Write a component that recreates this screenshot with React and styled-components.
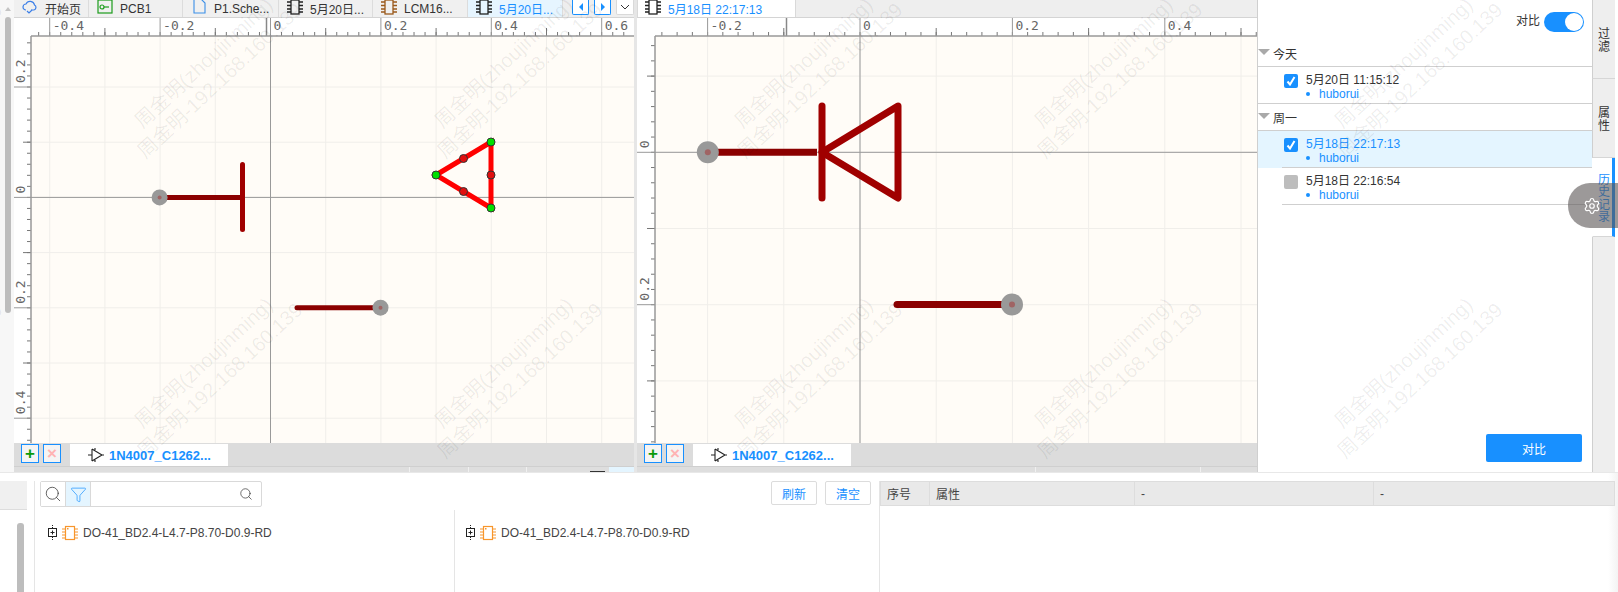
import styled, { createGlobalStyle } from "styled-components";
import { Search, Filter, Settings } from "lucide-react";

const GlobalStyle = createGlobalStyle`
  html, body { margin: 0; padding: 0; background: #fff; }
  body { font-family: "Liberation Sans", "Noto Sans CJK SC", sans-serif; font-size: 12px; color: #333; }
  * { box-sizing: border-box; }
`;

const Page = styled.div`
  position: relative;
  width: 1618px;
  height: 592px;
  overflow: hidden;
  display: flex;
  flex-direction: column;
`;

const Top = styled.div`
  height: 473px;
  flex: none;
  display: flex;
  border-bottom: 1px solid #e8e8e8;
`;

const Gutter = styled.div`
  width: 14px;
  flex: none;
  background: #f7f7f7;
  padding: 7px 3px 0 5px;
  &::before {
    content: "";
    display: block;
    width: 0;
    height: 0;
    margin: 0 0 6px 0;
    border-left: 3px solid transparent;
    border-right: 3px solid transparent;
    border-bottom: 4px solid #c4c4c4;
  }
`;

const ScrollThumb = styled.div`
  width: 6px;
  height: ${(p) => p.$h}px;
  background: #bdbdbd;
  border-radius: 3px;
`;

const Pane = styled.div`
  width: 620px;
  display: flex;
  flex-direction: column;
  flex: none;
`;

const PaneGap = styled.div`
  width: 3px;
  flex: none;
  background: #e6e6e6;
`;

const TabBar = styled.div`
  height: 18px;
  flex: none;
  display: flex;
  background: #eeeeee;
  border-bottom: 1px solid #d4d4d4;
  overflow: hidden;
`;

const DocTab = styled.div`
  width: ${(p) => p.$w}px;
  display: flex;
  align-items: center;
  gap: 7px;
  padding-left: 8px;
  flex: none;
  white-space: nowrap;
  background: ${(p) => (p.$active ? "#e6f5ff" : "#f0f0f0")};
  color: ${(p) => (p.$active ? "#1890ff" : "#333")};
  border-right: 1px solid #dcdcdc;
  svg { flex: none; margin-top: -4px; }
`;

const CompareTab = styled(DocTab)`
  background: #fff;
  color: #1890ff;
  border: 1px solid #d9d9d9;
  border-top: 0;
  height: 18px;
  padding-left: 7px;
`;

const NavGroup = styled.div`
  display: flex;
  margin-left: 9px;
  gap: 5px;
`;

const NavButton = styled.div`
  width: ${(p) => (p.$plain ? 18 : 17)}px;
  height: 15px;
  background: #fff;
  border: 1px solid ${(p) => (p.$plain ? "#d9d9d9" : "#1890ff")};
  border-top: 0;
  border-radius: 0 0 2px 2px;
  display: flex;
  align-items: center;
  justify-content: center;
`;

const Canvas = styled.svg`
  display: block;
  width: 620px;
  height: 425px;
  flex: none;
  background: #fff;
`;

const BottomTabs = styled.div`
  height: 23px;
  flex: none;
  background: #dcdcdc;
  display: flex;
  align-items: flex-end;
  padding-left: 7px;
`;

const SquareBtn = styled.div`
  width: 18px;
  height: 19px;
  margin: 0 4px 3px 0;
  background: #f4f4f4;
  border: 1px solid #1890ff;
  display: flex;
  align-items: center;
  justify-content: center;
  font-size: 17px;
  font-weight: 700;
  line-height: 1;
  color: ${(p) => p.$color};
`;

const SheetTab = styled.div`
  width: 158px;
  height: 22px;
  margin-left: 5px;
  background: #fff;
  display: flex;
  align-items: center;
  gap: 5px;
  padding-left: 18px;
  color: #1890ff;
  font-weight: 700;
  font-size: 13px;
  white-space: nowrap;
`;

const Strip = styled.div`
  height: 6px;
  flex: none;
  background: #dedede;
  border-top: 1px solid #cfcfcf;
  display: flex;
  justify-content: flex-end;
`;

const StripCell = styled.div`
  flex: none;
  width: ${(p) => p.$w}px;
  background: ${(p) => p.$bg || "transparent"};
  border-left: ${(p) => (p.$line ? "1px solid #f0f0f0" : "0")};
  border-bottom: ${(p) => (p.$mark ? "1px solid #333" : "0")};
`;

const SidePanel = styled.div`
  width: 335px;
  flex: none;
  position: relative;
  display: flex;
  flex-direction: column;
  background: #fff;
  border-left: 1px solid #cfcfcf;
`;

const CompareSwitch = styled.div`
  height: 40px;
  flex: none;
  display: flex;
  justify-content: flex-end;
  align-items: flex-start;
  gap: 4px;
  padding: 12px 8px 0 0;
  line-height: 19px;
`;

const Toggle = styled.div`
  width: 40px;
  height: 20px;
  border-radius: 10px;
  background: #1890ff;
  padding: 1px;
  display: flex;
  justify-content: flex-end;
  &::after {
    content: "";
    width: 18px;
    height: 18px;
    border-radius: 50%;
    background: #fff;
  }
`;

const GroupHead = styled.div`
  height: 27px;
  display: flex;
  align-items: center;
  gap: 3px;
  padding-top: 1px;
  border-bottom: 1px solid #cfcfcf;
  font-size: 12px;
  &::before {
    content: "";
    width: 0;
    height: 0;
    margin-top: -3px;
    border-left: 6px solid transparent;
    border-right: 6px solid transparent;
    border-top: 6px solid #a9a9a9;
  }
`;

const HistoryRow = styled.div`
  height: 37px;
  display: flex;
  padding: 7px 0 0 26px;
  gap: 8px;
  background: ${(p) => (p.$selected ? "#e4f5ff" : "transparent")};
  color: ${(p) => (p.$selected ? "#1890ff" : "#333")};
  position: relative;
  &::after {
    content: "";
    position: absolute;
    left: ${(p) => (p.$inset ? 24 : 0)}px;
    right: 0;
    bottom: 0;
    border-bottom: 1px solid #cfcfcf;
  }
`;

const Check = styled.div`
  width: 14px;
  height: 14px;
  flex: none;
  border-radius: 2px;
  background: ${(p) => (p.$on ? "#1890ff" : "#bdbdbd")};
  display: flex;
  align-items: center;
  justify-content: center;
`;

const HistoryText = styled.div`
  line-height: 14px;
  margin-top: -1px;
`;

const Author = styled.div`
  display: flex;
  align-items: center;
  color: #1890ff;
  &::before {
    content: "";
    width: 4px;
    height: 4px;
    border-radius: 50%;
    background: #1890ff;
    margin: 0 9px 0 0;
  }
`;

const CompareButton = styled.div`
  position: absolute;
  right: 10px;
  top: 434px;
  width: 96px;
  height: 28px;
  border-radius: 2px;
  background: #1890ff;
  color: #fff;
  display: flex;
  align-items: center;
  justify-content: center;
`;

const SideTabs = styled.div`
  width: 23px;
  flex: none;
  display: flex;
  flex-direction: column;
  background: #eeeeee;
`;

const SideTab = styled.div`
  height: 79px;
  flex: none;
  display: flex;
  justify-content: center;
  align-items: center;
  border-bottom: 1px solid #d6d6d6;
  border-left: 1px solid ${(p) => (p.$active ? "#fff" : "#cfcfcf")};
  background: ${(p) => (p.$active ? "#fff" : "#eeeeee")};
  color: ${(p) => (p.$active ? "#1890ff" : "#333")};
  border-right: ${(p) => (p.$active ? "3px solid #1890ff" : "0")};
  padding-left: ${(p) => (p.$active ? 3 : 0)}px;
  span {
    width: 12px;
    line-height: 12.5px;
    word-break: break-all;
    text-align: center;
    margin-top: 3px;
  }
`;

const SideRest = styled.div`
  flex: 1;
  border-left: 1px solid #cfcfcf;
`;

const FloatGear = styled.div`
  position: absolute;
  right: 0;
  top: 183px;
  width: 50px;
  height: 45px;
  border-radius: 22px 0 0 22px;
  background: rgba(90, 85, 85, 0.6);
  color: #fff;
  display: flex;
  align-items: center;
  padding-left: 15px;
`;

const Bottom = styled.div`
  flex: 1;
  display: flex;
  padding-top: 8px;
  background: linear-gradient(to right, #fff 99.4%, #f3f3f3);
`;

const BottomGutter = styled.div`
  width: 35px;
  flex: none;
  border-right: 1px solid #e5e5e5;
  display: flex;
  flex-direction: column;
`;

const GutterTab = styled.div`
  width: 27px;
  height: 29px;
  flex: none;
  background: #f0f0f0;
  border-bottom: 1px solid #ddd;
`;

const GutterScroll = styled.div`
  width: 7px;
  flex: 1;
  margin: 13px 0 0 17px;
  background: #bdbdbd;
  border-radius: 3px 3px 0 0;
`;

const Middle = styled.div`
  width: 845px;
  flex: none;
  display: flex;
  flex-direction: column;
  border-right: 1px solid #e5e5e5;
`;

const Toolbar = styled.div`
  height: 29px;
  flex: none;
  display: flex;
  justify-content: space-between;
  padding: 0 8px 0 5px;
`;

const SearchBox = styled.div`
  width: 222px;
  height: 26px;
  display: flex;
  border: 1px solid #d9d9d9;
  border-radius: 2px;
`;

const SearchCell = styled.div`
  width: 25px;
  flex: none;
  display: flex;
  align-items: center;
  justify-content: center;
  border-right: 1px solid #d9d9d9;
  background: ${(p) => (p.$on ? "#e4f5ff" : "#fff")};
`;

const SearchInput = styled.div`
  flex: 1;
  display: flex;
  align-items: center;
  justify-content: flex-end;
  padding-right: 8px;
`;

const ToolButtons = styled.div`
  display: flex;
  gap: 8px;
`;

const ToolButton = styled.div`
  width: 46px;
  height: 24px;
  border: 1px solid #dcdcdc;
  border-radius: 2px;
  color: #1890ff;
  display: flex;
  align-items: center;
  justify-content: center;
`;

const Trees = styled.div`
  flex: 1;
  display: grid;
  grid-template-columns: 419px 1fr;
`;

const TreeColumn = styled.div`
  padding: 14px 0 0 ${(p) => (p.$divider ? 10 : 12)}px;
  border-left: ${(p) => (p.$divider ? "1px solid #e5e5e5" : "0")};
`;

const TreeRow = styled.div`
  display: flex;
  align-items: center;
  gap: 5px;
  height: 18px;
  color: #444;
  white-space: nowrap;
`;

const Table = styled.div`
  width: 735px;
  flex: none;
  height: 25px;
  display: grid;
  grid-template-columns: 50px 205px 239px 241px;
`;

const HeadCell = styled.div`
  background: #e9e9e9;
  border: 1px solid #dddddd;
  border-left: ${(p) => (p.$first ? "1px solid #dddddd" : "0")};
  display: flex;
  align-items: center;
  padding-left: 6px;
  color: #444;
`;

const WatermarkLayer = styled.div`
  position: absolute;
  left: -184px;
  top: 128px;
  display: grid;
  grid-template-columns: repeat(7, 300px);
  grid-auto-rows: 300px;
  pointer-events: none;
  z-index: 5;
`;

const Watermark = styled.div`
  width: max-content;
  height: max-content;
  transform: rotate(-43deg);
  transform-origin: 0 0;
  font-size: 20px;
  line-height: 24px;
  text-align: center;
  white-space: nowrap;
  color: rgba(0, 0, 0, 0.07);
`;

const RulerText = styled.text`
  font-family: "DejaVu Sans Mono", monospace;
  font-size: 13px;
  fill: #666;
`;

function range(from, to, step) {
  const out = [];
  for (let v = from; v <= to; v += step) out.push(v);
  return out;
}

// ruler + grid for one schematic view; values are in pane pixels
function Schematic({ ox, oy, unit, rulerW, extraTick, children }) {
  const W = 620;
  const H = 425;
  const R = 18;
  const xs = range(-12, 12, 1).map((i) => ({ i, p: ox + i * unit }));
  const ys = range(-8, 8, 1).map((i) => ({ i, p: oy + i * unit }));
  const fine = unit / 5;
  const xTicks = range(-60, 60, 1).map((i) => ox + i * fine).filter((p) => p > rulerW && p < W);
  const yTicks = range(-40, 40, 1).map((i) => oy + i * fine).filter((p) => p > R && p < H);
  const label = (i) => (Math.abs(i) * 0.1).toFixed(1);
  return (
    <Canvas viewBox={`0 0 ${W} ${H}`}>
      <rect x={rulerW} y={R} width={W - rulerW} height={H - R} fill="#fffcf7" />
      {xs.filter((t) => t.p > rulerW && t.p < W).map((t) => (
        <line key={t.i} x1={t.p} x2={t.p} y1={R} y2={H} stroke="#f0eeea" />
      ))}
      {ys.filter((t) => t.p > R && t.p < H).map((t) => (
        <line key={t.i} x1={rulerW} x2={W} y1={t.p} y2={t.p} stroke="#f0eeea" />
      ))}
      {xTicks.map((p) => (
        <line key={p} x1={p} x2={p} y1={R - 4} y2={R} stroke="#777" />
      ))}
      {yTicks.map((p) => (
        <line key={p} x1={rulerW - 4} x2={rulerW} y1={p} y2={p} stroke="#777" />
      ))}
      {xs.filter((t) => t.p > rulerW && t.p < W).map((t) =>
        t.i % 2 === 0 ? (
          <g key={t.i}>
            {t.i !== 0 && <line x1={t.p} x2={t.p} y1={0} y2={R} stroke="#999" />}
            <RulerText x={t.p + 3} y={12}>
              {t.i < 0 ? "-" : ""}
              {t.i === 0 ? "0" : label(t.i)}
            </RulerText>
          </g>
        ) : (
          <line key={t.i} x1={t.p} x2={t.p} y1={R - 8} y2={R} stroke="#777" />
        )
      )}
      {ys.filter((t) => t.p > R && t.p < H).map((t) =>
        t.i % 2 === 0 ? (
          <g key={t.i}>
            {t.i !== 0 && <line x1={0} x2={rulerW} y1={t.p} y2={t.p} stroke="#999" />}
            <RulerText transform={`translate(${rulerW - 6} ${t.p - 4}) rotate(-90)`}>
              {t.i === 0 ? "0" : label(t.i)}
            </RulerText>
          </g>
        ) : (
          <line key={t.i} x1={rulerW - 8} x2={rulerW} y1={t.p} y2={t.p} stroke="#777" />
        )
      )}
      <line x1={extraTick} x2={extraTick} y1={0} y2={R} stroke="#888" strokeWidth="1.5" />
      <line x1={rulerW} x2={W} y1={R} y2={R} stroke="#999" strokeWidth="1.5" />
      <line x1={rulerW} x2={rulerW} y1={R} y2={H} stroke="#999" strokeWidth="1.5" />
      <line x1={0} x2={W} y1={oy} y2={oy} stroke="#999" />
      <line x1={ox} x2={ox} y1={0} y2={H} stroke="#999" />
      {children}
    </Canvas>
  );
}

function Pad({ x, y, r, dot }) {
  return (
    <g>
      <circle cx={x} cy={y} r={r} fill="#999" />
      <circle cx={x} cy={y} r={dot} fill="#a06464" />
    </g>
  );
}

function Handle({ x, y, fill }) {
  return <circle cx={x} cy={y} r="4" fill={fill} stroke="#333" strokeWidth="1" />;
}

function ChipIcon({ color = "#222" }) {
  return (
    <svg width="16" height="16" viewBox="0 0 16 16" fill="none" stroke={color} strokeWidth="1.3">
      <rect x="4" y="1" width="8" height="14" />
      <path d="M0 3h4M0 6.500h4M0 10h4M0 13h4M12 3h4M12 6.500h4M12 10h4M12 13h4" />
    </svg>
  );
}

function DiodeIcon() {
  return (
    <svg width="16" height="16" viewBox="0 0 16 16" fill="none" stroke="#222" strokeWidth="1.1">
      <path d="M0 8h4M4 2v12M4 2l10 6-10 6M14 8h2M7 1v3M7 12v3" />
    </svg>
  );
}

function TreeIcons() {
  return (
    <>
      <svg width="11" height="16" viewBox="0 0 11 16" fill="none" stroke="#222">
        <path d="M5.500 0v3M5.500 12v4" strokeDasharray="1 1" />
        <rect x="1.500" y="3.500" width="8" height="8" />
        <path d="M3.500 7.500h4M5.500 5.500v4" />
      </svg>
      <svg width="16" height="16" viewBox="0 0 16 16" fill="none" stroke="#f7962c" strokeWidth="1.2" style={{ marginLeft: -1 }}>
        <rect x="3.500" y="1.500" width="9" height="13" />
        <path d="M0 4h3.500M0 7h3.500M0 10h3.500M0 13h3.500M12.500 4H16M12.500 7H16M12.500 10H16M12.500 13H16" />
        <rect x="5" y="3" width="1.500" height="1.500" fill="#f7962c" stroke="none" />
      </svg>
    </>
  );
}

function CheckMark() {
  return (
    <svg width="10" height="10" viewBox="0 0 10 10" fill="none" stroke="#fff" strokeWidth="2">
      <path d="M1.500 5.500 4 8.500 8.500 1" />
    </svg>
  );
}

const tabIcons = {
  cloud: (
    <svg width="16" height="14" viewBox="0 0 16 14" fill="none" stroke="#3b7fe8" strokeWidth="1.2">
      <path d="M4 10a3 3 0 0 1 0-6 4.500 4.500 0 0 1 8.500 1 2.700 2.700 0 0 1-.5 5H9" />
      <path d="M5 11l2 2 3-3" />
    </svg>
  ),
  pcb: (
    <svg width="16" height="14" viewBox="0 0 16 14" fill="none" stroke="#1b9c1b" strokeWidth="1.2">
      <rect x="1" y="0" width="14" height="13" />
      <circle cx="5" cy="7" r="2" />
      <path d="M7 7h5" />
    </svg>
  ),
  doc: (
    <svg width="16" height="15" viewBox="0 0 16 15" fill="none" stroke="#3b8fe8" strokeWidth="1.1">
      <path d="M3 0v14h11V4L10 0z" />
    </svg>
  ),
  chipBlack: <ChipIcon />,
  chipBrown: <ChipIcon color="#9a5a1c" />,
};

const docTabs = [
  { w: 75, icon: "cloud", label: "开始页" },
  { w: 94, icon: "pcb", label: "PCB1" },
  { w: 96, icon: "doc", label: "P1.Sche..." },
  { w: 94, icon: "chipBlack", label: "5月20日..." },
  { w: 95, icon: "chipBrown", label: "LCM16..." },
  { w: 95, icon: "chipBlack", label: "5月20日...", active: true },
];

const history = [
  { group: "今天", rows: [{ time: "5月20日 11:15:12", on: true }] },
  {
    group: "周一",
    rows: [
      { time: "5月18日 22:17:13", on: true, selected: true, inset: true },
      { time: "5月18日 22:16:54", on: false, inset: true },
    ],
  },
];

function SheetTabs() {
  return (
    <BottomTabs>
      <SquareBtn $color="#0a9a0a">+</SquareBtn>
      <SquareBtn $color="#ffb3b3">×</SquareBtn>
      <SheetTab>
        <DiodeIcon />
        1N4007_C1262...
      </SheetTab>
    </BottomTabs>
  );
}

export default function App() {
  return (
    <Page>
      <GlobalStyle />
      <Top>
        <Gutter>
          <ScrollThumb $h={296} />
        </Gutter>
        <Pane>
          <TabBar>
            {docTabs.map((t) => (
              <DocTab key={t.w + t.icon} $w={t.w} $active={t.active}>
                {tabIcons[t.icon]}
                {t.label}
              </DocTab>
            ))}
            <NavGroup>
              <NavButton>
                <svg width="6" height="8"><path d="M5 0v8L1 4z" fill="#1890ff" /></svg>
              </NavButton>
              <NavButton>
                <svg width="6" height="8"><path d="M1 0v8l4-4z" fill="#1890ff" /></svg>
              </NavButton>
              <NavButton $plain>
                <svg width="10" height="6" fill="none" stroke="#333"><path d="M1 1l4 4 4-4" /></svg>
              </NavButton>
            </NavGroup>
          </TabBar>
          <Schematic ox={256.5} oy={179.4} unit={55.2} rulerW={17} extraTick={252.5}>
            <line x1="146" y1="179.400" x2="228.500" y2="179.400" stroke="#8b0000" strokeWidth="5" />
            <line x1="228.500" y1="146.500" x2="228.500" y2="211.500" stroke="#a00000" strokeWidth="5" strokeLinecap="round" />
            <Pad x={145.6} y={179.4} r={8} dot={2} />
            <line x1="283" y1="289.700" x2="366" y2="289.700" stroke="#8b0000" strokeWidth="5" strokeLinecap="round" />
            <Pad x={366.5} y={289.7} r={8} dot={2} />
            <path d="M422 157 477 124V190Z" fill="none" stroke="#ff0000" strokeWidth="5" />
            <Handle x={449.5} y={140.5} fill="#e01010" />
            <Handle x={449.5} y={173.5} fill="#e01010" />
            <Handle x={477} y={157} fill="#e01010" />
            <Handle x={422} y={157} fill="#00e000" />
            <Handle x={477} y={124} fill="#00e000" />
            <Handle x={477} y={190} fill="#00e000" />
          </Schematic>
          <SheetTabs />
          <Strip>
            <StripCell $w={59} $line />
            <StripCell $w={58} $line />
            <StripCell $w={64} $line />
            <StripCell $w={15} $mark />
            <StripCell $w={4} />
            <StripCell $w={25} $bg="#e4f5ff" />
          </Strip>
        </Pane>
        <PaneGap />
        <Pane>
          <TabBar>
            <CompareTab $w={159}>
              <ChipIcon />
              5月18日 22:17:13
            </CompareTab>
          </TabBar>
          <Schematic ox={223} oy={134.3} unit={76.2} rulerW={18} extraTick={149.5}>
            <line x1="71" y1="134.300" x2="180" y2="134.300" stroke="#8b0000" strokeWidth="7" />
            <line x1="185" y1="88" x2="185" y2="180" stroke="#a00000" strokeWidth="7" strokeLinecap="round" />
            <path d="M261 88 185 134.300 261 180Z" fill="none" stroke="#a00000" strokeWidth="7" strokeLinejoin="round" />
            <Pad x={70.8} y={134.3} r={11} dot={3} />
            <line x1="260" y1="286.500" x2="375" y2="286.500" stroke="#8b0000" strokeWidth="7" strokeLinecap="round" />
            <Pad x={375} y={286.5} r={11} dot={3} />
          </Schematic>
          <SheetTabs />
          <Strip>
            <StripCell $w={165} $line />
            <StripCell $w={57} $line />
          </Strip>
        </Pane>
        <SidePanel>
          <CompareSwitch>
            对比
            <Toggle />
          </CompareSwitch>
          {history.map((g) => (
            <div key={g.group}>
              <GroupHead>{g.group}</GroupHead>
              {g.rows.map((r) => (
                <HistoryRow key={r.time} $selected={r.selected} $inset={r.inset}>
                  <Check $on={r.on}>{r.on && <CheckMark />}</Check>
                  <HistoryText>
                    {r.time}
                    <Author>huborui</Author>
                  </HistoryText>
                </HistoryRow>
              ))}
            </div>
          ))}
          <CompareButton>对比</CompareButton>
        </SidePanel>
        <SideTabs>
          <SideTab><span>过滤</span></SideTab>
          <SideTab><span>属性</span></SideTab>
          <SideTab $active><span>历史记录</span></SideTab>
          <SideRest />
        </SideTabs>
      </Top>
      <Bottom>
        <BottomGutter>
          <GutterTab />
          <GutterScroll />
        </BottomGutter>
        <Middle>
          <Toolbar>
            <SearchBox>
              <SearchCell>
                <Search size={18} strokeWidth={1} color="#333" />
              </SearchCell>
              <SearchCell $on>
                <Filter size={17} strokeWidth={1} color="#1890ff" />
              </SearchCell>
              <SearchInput>
                <Search size={14} strokeWidth={1.2} color="#333" />
              </SearchInput>
            </SearchBox>
            <ToolButtons>
              <ToolButton>刷新</ToolButton>
              <ToolButton>清空</ToolButton>
            </ToolButtons>
          </Toolbar>
          <Trees>
            <TreeColumn>
              <TreeRow><TreeIcons />DO-41_BD2.4-L4.7-P8.70-D0.9-RD</TreeRow>
            </TreeColumn>
            <TreeColumn $divider>
              <TreeRow><TreeIcons />DO-41_BD2.4-L4.7-P8.70-D0.9-RD</TreeRow>
            </TreeColumn>
          </Trees>
        </Middle>
        <Table>
          <HeadCell $first>序号</HeadCell>
          <HeadCell>属性</HeadCell>
          <HeadCell>-</HeadCell>
          <HeadCell>-</HeadCell>
        </Table>
      </Bottom>
      <FloatGear>
        <Settings size={18} strokeWidth={1.6} />
      </FloatGear>
      <WatermarkLayer>
        {range(1, 21, 1).map((i) => (
          <div key={i}>
            <Watermark>
              周金明(zhoujinming)
              <br />
              周金明-192.168.160.139
            </Watermark>
          </div>
        ))}
      </WatermarkLayer>
    </Page>
  );
}
